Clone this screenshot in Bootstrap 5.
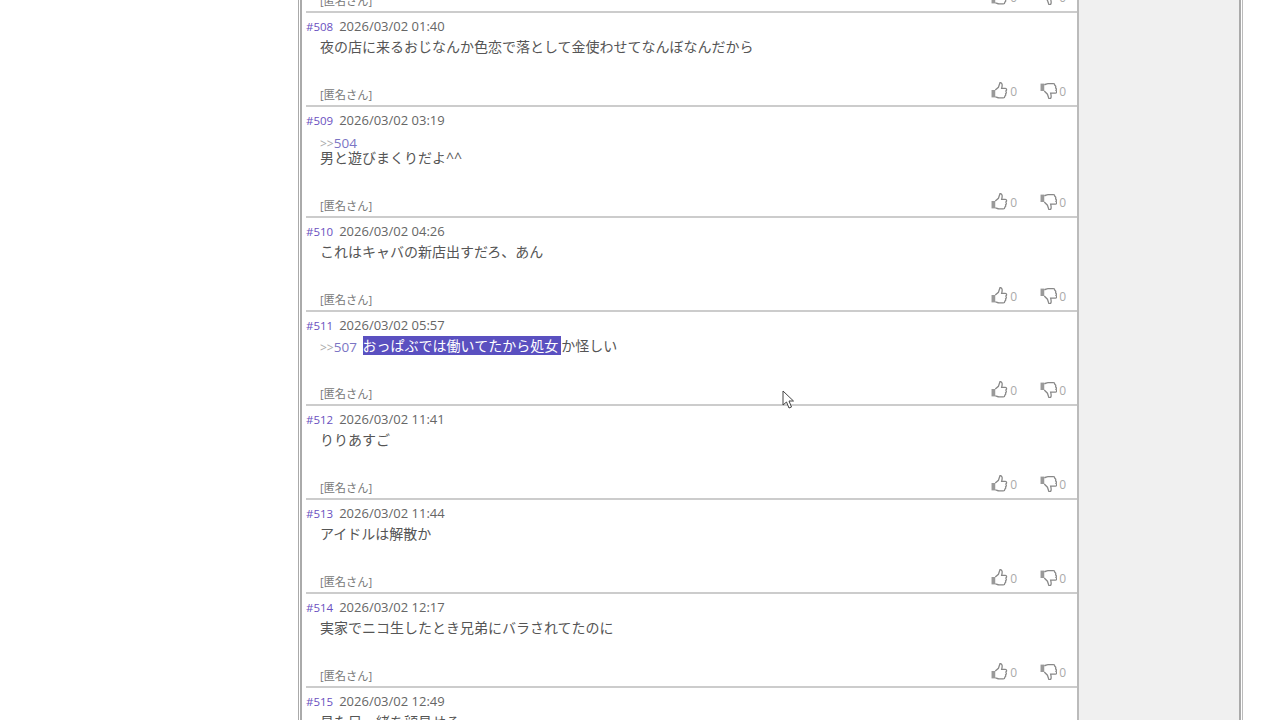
<!DOCTYPE html>
<html lang="ja">
<head>
  <meta charset="UTF-8">
  <meta name="viewport" content="width=device-width, initial-scale=1.0">
  <title>レス一覧</title>
  <link href="https://cdn.jsdelivr.net/npm/bootstrap@5.3.0/dist/css/bootstrap.min.css" rel="stylesheet">
  <style>
    html, body { height: 720px; overflow: hidden; background: #fff; }
    body { font-family: "Open Sans", "Noto Sans CJK JP", sans-serif; color: #555; }
    .page-outer { width: 945px; height: 720px; margin-left: 298px; padding: 0 1px 0 1px; border-left: 1px solid #aaa; border-right: 1px solid #bbb; }
    .page-frame { height: 720px; border-left: 2px solid #aaa; border-right: 2px solid #aaa; overflow: hidden; }
    .main-col { width: 777px; border-right: 2px solid #bbb; height: 720px; overflow: hidden; }
    .side-col { background: #f0f0f0; }
    .post-list { margin: -81px 0 0 4px; padding: 0; list-style: none; }
    .post-row { height: 94px; border-bottom: 2px solid #ccc; padding-top: 3px; }
    .post-row.two-lines { height: 111px; }
    .post-no { color: #6a4fc0; font-size: 11.5px; }
    .post-date { color: #666; font-size: 13px; margin-left: 6px; }
    .post-head { line-height: 18px; height: 18px; }
    .post-text { margin: 5px 0 0 14px; font-size: 14px; line-height: 16px; color: #555; }
    .two-lines .post-text { margin-top: 6px; line-height: 15px; }
    .two-lines .anchor-line { height: 16px; }
    .anchor-link { color: #7b75c4; font-size: 13.5px; line-height: 1; vertical-align: -1px; }
    .anchor-link i { color: #aaa; font-style: normal; font-size: 12px; }
    .picked { background: #5a50c0; color: #fff; padding-right: 3px; margin-left: 2px; }
    .post-foot { margin: auto 11px 1px 14px; }
    .post-name { font-size: 11.2px; color: #777; }
    .vote { color: #aaa; font-size: 12px; gap: 2px; margin-bottom: 3px; }
    .vote svg { width: 17px; height: 17px; margin-bottom: 2px; }
    .vote-up { margin-right: 23px; }
    .cursor-mark { position: absolute; left: 782px; top: 390px; width: 12px; height: 19px; }
  </style>
</head>
<body>
  <div class="page-outer">
    <div class="page-frame d-flex">
      <div class="main-col flex-shrink-0">
        <ul class="post-list" id="posts"></ul>
      </div>
      <div class="side-col flex-grow-1"></div>
    </div>
  </div>
  <svg class="cursor-mark" viewBox="0 0 12 19"><path d="M1 1v14l3.500-3 2.500 6 2.500-1-2.500-6h4.500z" fill="#fff" stroke="#444"/></svg>

  <script>
    const up = '<svg viewBox="0 0 16 16"><path d="M.5 7.500h3.500v7H.5z" fill="#999"/><path d="M4 7.500l3-2.500 1.500-4.500c2 0 2.500 2 1.500 5.500h3.500c1.500 0 1.500 2 .5 2.500.7 1 .5 2-.3 2.500.3 1 0 2-.7 2.300 0 1-.5 1.700-1.500 1.700H7.500c-1.500 0-2-1-3.500-1" fill="none" stroke="#888" stroke-width="1.200"/></svg>';
    const down = '<svg viewBox="0 0 16 16"><path d="M.5 1.500h3.500v7H.5z" fill="#999"/><path d="M4 2.500c1.500 0 2-1 3.500-1h5c1 0 1.500.7 1.500 1.700.7.300 1 1.300.7 2.300.8.500 1 1.500.3 2.500 1 .5 1 2.500-.5 2.500H10c1 3.500.5 5.500-1.500 5.500L7 11.500 4 8.500" fill="none" stroke="#888" stroke-width="1.200"/></svg>';
    const anc = n => `<span class="anchor-link"><i>&gt;&gt;</i>${n}</span>`;
    const posts = [
      ['#507', '2026/03/02 00:58', ''],
      ['#508', '2026/03/02 01:40', '夜の店に来るおじなんか色恋で落として金使わせてなんぼなんだから'],
      ['#509', '2026/03/02 03:19', `<div class="anchor-line">${anc(504)}</div><div>男と遊びまくりだよ^^</div>`, 'two-lines'],
      ['#510', '2026/03/02 04:26', 'これはキャバの新店出すだろ、あん'],
      ['#511', '2026/03/02 05:57', anc(507) + ' <span class="picked">おっぱぶでは働いてたから処女</span>か怪しい'],
      ['#512', '2026/03/02 11:41', 'りりあすご'],
      ['#513', '2026/03/02 11:44', 'アイドルは解散か'],
      ['#514', '2026/03/02 12:17', '実家でニコ生したとき兄弟にバラされてたのに'],
      ['#515', '2026/03/02 12:49', '見た目一緒を顔見せる']
    ];
    document.getElementById('posts').innerHTML = posts.map(p => `
      <li class="post-row d-flex flex-column ${p[3] || ''}">
        <div class="post-head"><span class="post-no">${p[0]}</span><span class="post-date">${p[1]}</span></div>
        <div class="post-text">${p[2]}</div>
        <div class="post-foot d-flex align-items-end">
          <span class="post-name me-auto">[匿名さん]</span>
          <span class="vote vote-up d-flex align-items-center">${up}<span>0</span></span>
          <span class="vote d-flex align-items-center">${down}<span>0</span></span>
        </div>
      </li>`).join('');
  </script>
  <script src="https://cdn.jsdelivr.net/npm/bootstrap@5.3.0/dist/js/bootstrap.bundle.min.js"></script>
</body>
</html>
